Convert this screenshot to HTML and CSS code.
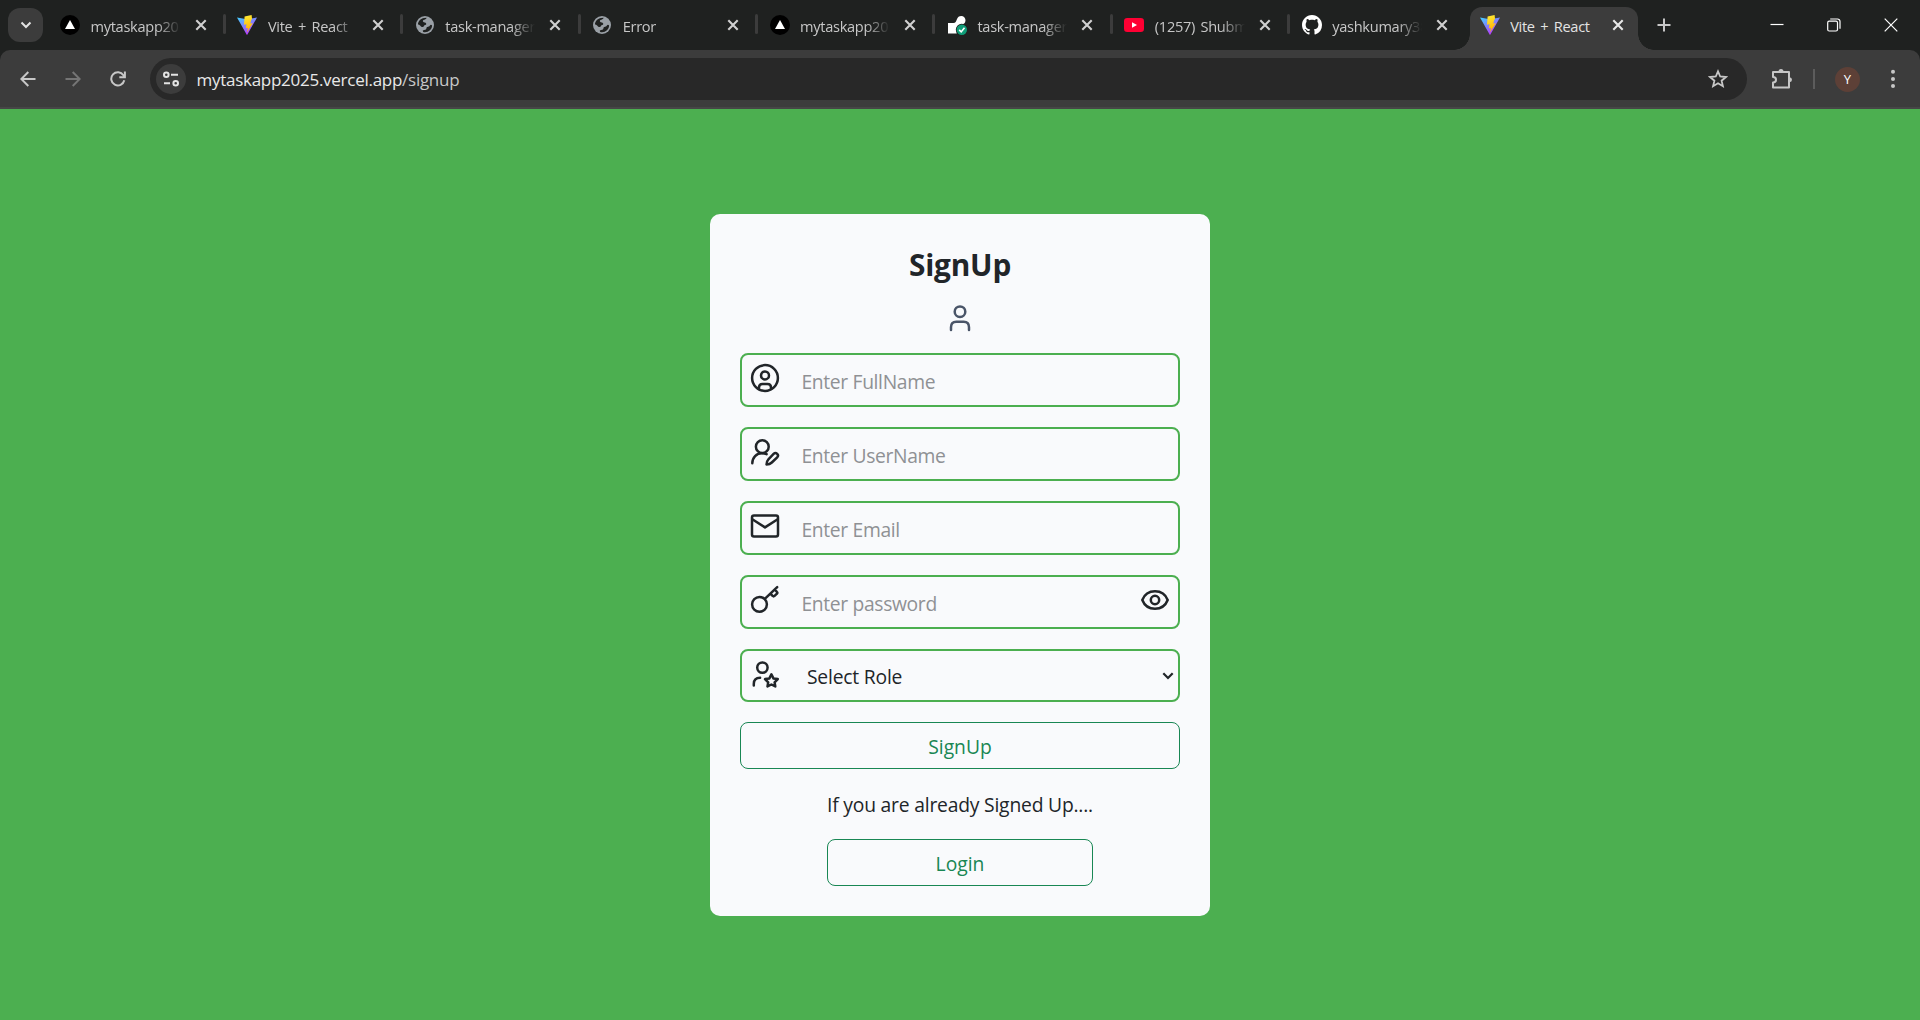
FILE: index.html
```html
<!DOCTYPE html>
<html lang="en">
<head>
<meta charset="utf-8">
<title>Vite + React</title>
<link rel="stylesheet" href="styles.css">
</head>
<body>
<svg class="defs" aria-hidden="true">
  <defs>
    <linearGradient id="vite-blue" x1="0" y1="0" x2="0.6" y2="1"><stop offset="0" stop-color="#41d1ff"/><stop offset="1" stop-color="#bd34fe"/></linearGradient>
    <linearGradient id="vite-bolt" x1="0.4" y1="0" x2="0.6" y2="1"><stop offset="0" stop-color="#ffea33"/><stop offset="1" stop-color="#ffa800"/></linearGradient>
    <symbol id="vercel" viewBox="0 0 20 20"><circle cx="10" cy="10" r="10" fill="#000"/><path d="M10 5l5 9H5z" fill="#fff"/></symbol>
    <symbol id="vite" viewBox="0 0 20 20"><path d="M0 2.600L9.900 4.300 20 2.600 10.400 19.600Q10 20.200 9.600 19.600z" fill="url(#vite-blue)"/><path d="M14.600 0L7.600 1.400l-.6 8.300 2.500-.4-.7 4 2.100-.4-1 4.700L15.800 8.200l-2.500.4 1-4 .8-.2z" fill="url(#vite-bolt)"/></symbol>
    <symbol id="globe" viewBox="0 0 20 20"><circle cx="10" cy="10" r="9" fill="#9aa0a6"/><path d="M3 8.500C3.500 6 5.800 3.300 9 2.900l2.600-.1c-.3 1.700-1.900 1.600-3.100 2.300-1 .6-.7 1.900.3 2.100 1.400.2 2.600.8 2.500 1.900-.2 1.200-2 .7-2.300 1.900-.4 1.300-2 1.100-3 .4C5 10.700 4.600 9.400 3 9.500zM17.100 10.500c-.6-.9-1.700-.8-2.200 0-.6 1.200-1.500 1-2.700 1.500-1.300.6-.3 1.700-1.300 2.400-1 .6-2.600.2-3.200 1.400l.5 1.200c4.600 1.100 8.700-2.100 8.900-6.500z" fill="#1f2120"/></symbol>
    <symbol id="render" viewBox="0 0 20 20"><path d="M1 8h5.500c2 0 2.700-1.500 3.300-3.400C10.600 2 12.200 1 14.200 1c2.500 0 4.300 2 4.300 4.300 0 2.900-2 4.400-4.500 4.400-2.400.4-4.200 2.300-4.300 5V18.500H1z" fill="#fff"/><circle cx="14.800" cy="14.800" r="6" fill="#1f2120"/><circle cx="14.800" cy="14.800" r="5.200" fill="#0f9d78"/><path d="M12.200 14.900l2 2 3.300-4.200" fill="none" stroke="#fff" stroke-width="1.600"/></symbol>
    <symbol id="youtube" viewBox="0 0 20 20"><rect y="3" width="20" height="14" rx="3.300" fill="#ff0033"/><path d="M8 7.200l5 2.800-5 2.800z" fill="#fff"/></symbol>
    <symbol id="github" viewBox="0 0 16 16"><path fill="#fff" d="M8 0C3.580 0 0 3.580 0 8c0 3.540 2.290 6.530 5.470 7.590.4.070.55-.17.55-.38 0-.19-.01-.82-.01-1.490-2.010.37-2.530-.49-2.690-.94-.09-.23-.48-.94-.82-1.130-.28-.15-.68-.52-.01-.53.63-.01 1.080.58 1.230.82.72 1.210 1.870.87 2.330.66.07-.52.28-.87.51-1.070-1.780-.2-3.640-.89-3.640-3.950 0-.87.31-1.590.82-2.150-.08-.2-.36-1.020.08-2.120 0 0 .67-.21 2.200.82.64-.18 1.320-.27 2-.27s1.360.09 2 .27c1.530-1.040 2.200-.82 2.200-.82.44 1.100.16 1.920.08 2.120.51.56.82 1.270.82 2.150 0 3.070-1.870 3.750-3.650 3.950.29.25.54.73.54 1.480 0 1.070-.01 1.930-.01 2.200 0 .21.15.46.55.38A8.010 8.010 0 0 0 16 8c0-4.420-3.580-8-8-8z"/></symbol>
    <symbol id="close" viewBox="0 0 12 12"><path d="M1.300 1.300l9.400 9.400M10.700 1.300l-9.400 9.400" stroke="currentColor" stroke-width="2.100"/></symbol>
  </defs>
</svg>

<header class="browser">
  <div class="tabstrip">
    <button class="tab-search" aria-label="Search tabs"><svg width="12" height="8" viewBox="0 0 12 8"><path d="M1.500 1.500L6 6l4.500-4.500" class="line-2"/></svg></button>
    <div class="tabs">
      <div class="tab"><svg class="favicon"><use href="#vercel"/></svg><span class="tab-title">mytaskapp20</span><svg class="close"><use href="#close"/></svg></div>
      <div class="tab"><svg class="favicon"><use href="#vite"/></svg><span class="tab-title">Vite + React</span><svg class="close"><use href="#close"/></svg></div>
      <div class="tab"><svg class="favicon"><use href="#globe"/></svg><span class="tab-title">task-manager</span><svg class="close"><use href="#close"/></svg></div>
      <div class="tab"><svg class="favicon"><use href="#globe"/></svg><span class="tab-title">Error</span><svg class="close"><use href="#close"/></svg></div>
      <div class="tab"><svg class="favicon"><use href="#vercel"/></svg><span class="tab-title">mytaskapp20</span><svg class="close"><use href="#close"/></svg></div>
      <div class="tab"><svg class="favicon"><use href="#render"/></svg><span class="tab-title">task-manager</span><svg class="close"><use href="#close"/></svg></div>
      <div class="tab"><svg class="favicon"><use href="#youtube"/></svg><span class="tab-title">(1257) Shubm</span><svg class="close"><use href="#close"/></svg></div>
      <div class="tab"><svg class="favicon"><use href="#github"/></svg><span class="tab-title">yashkumary38</span><svg class="close"><use href="#close"/></svg></div>
      <div class="tab active"><svg class="favicon"><use href="#vite"/></svg><span class="tab-title">Vite + React</span><svg class="close"><use href="#close"/></svg></div>
    </div>
    <button class="new-tab" aria-label="New tab"><svg width="14" height="14" viewBox="0 0 14 14"><path d="M7 .5v13M.5 7h13" class="line-2"/></svg></button>
    <div class="window-controls">
      <svg width="14" height="14" viewBox="0 0 14 14"><path d="M.5 6.500h13"/></svg>
      <svg width="14" height="14" viewBox="0 0 14 14"><rect x=".7" y="3.200" width="9.800" height="9.800" rx="1.500"/><path d="M3.200 1h7.300a2.500 2.500 0 0 1 2.500 2.500v7.300"/></svg>
      <svg width="14" height="14" viewBox="0 0 14 14"><path d="M.7.700l12.600 12.600M13.300.700L.700 13.300"/></svg>
    </div>
  </div>

  <div class="toolbar">
    <nav class="nav-buttons">
      <svg width="16" height="16" viewBox="0 0 16 16"><path d="M15.500 8H1.800M8.300 1L1.300 8l7 7" class="line-2"/></svg>
      <svg class="disabled" width="16" height="16" viewBox="0 0 16 16"><path d="M.5 8h13.700M7.700 1l7 7-7 7" class="line-2"/></svg>
      <svg width="16" height="16" viewBox="0 0 16 16"><path d="M14.300 9.300A6.600 6.600 0 1 1 13.400 4.200L14.600 5.600M14.900.5v5.800H9.300" class="line-2"/></svg>
    </nav>
    <div class="omnibox">
      <span class="site-info"><svg width="16" height="16" viewBox="0 0 16 16"><circle cx="3.300" cy="3.700" r="2.300" class="line-2"/><path d="M8 3.700h7M1 12.300h6" class="line-2"/><circle cx="12.700" cy="12.300" r="2.300" class="line-2"/></svg></span>
      <span class="url">mytaskapp2025.vercel.app<span class="path">/signup</span></span>
      <svg class="bookmark" width="20" height="20" viewBox="0 0 20 20"><path d="M10 2.300l2.200 5.200 5.700.5-4.300 3.700 1.300 5.500-4.900-2.900-4.900 2.900 1.300-5.500L2.100 8l5.700-.5z" fill="none" stroke="currentColor" stroke-width="1.800"/></svg>
    </div>
    <div class="tools">
      <svg width="22" height="22" viewBox="0 0 22 22"><path d="M3 4h15v15.500H2v-5c2.300 0 3-1.200 3-2.800S4 9 2 9V4h3" fill="none" stroke="currentColor" stroke-width="2" stroke-linejoin="round"/><path d="M7.500 3.500a2.500 2.500 0 0 1 5 0zM18.500 9.200a2.500 2.500 0 0 1 0 5z" fill="currentColor"/></svg>
      <span class="divider"></span>
      <span class="avatar">Y</span>
      <svg class="menu" width="4" height="20" viewBox="0 0 4 20"><circle cx="2" cy="2.700" r="2"/><circle cx="2" cy="10" r="2"/><circle cx="2" cy="17" r="2"/></svg>
    </div>
  </div>
</header>

<main class="page">
  <form class="card">
    <h2 class="title">SignUp</h2>
    <svg class="user-icon" width="24" height="28" viewBox="0 0 24 28"><circle cx="12" cy="7.700" r="5.300"/><path d="M3 26v-2.800c0-3.600 1.900-5.500 5.300-5.500h7.400c3.400 0 5.300 1.900 5.300 5.500V26"/></svg>

    <label class="field">
      <svg class="icon" viewBox="0 0 30 30"><circle cx="15" cy="15" r="12.900"/><circle cx="15" cy="12.400" r="4"/><path d="M9 26v-1.400c0-2.600 1.200-3.600 3.500-3.600h5c2.300 0 3.500 1 3.500 3.600V26"/></svg>
      <input class="input" type="text" placeholder="Enter FullName">
    </label>
    <label class="field">
      <svg class="icon" viewBox="0 0 30 30"><circle cx="12.300" cy="9.700" r="6.400"/><path d="M2.300 26.300C2.300 20.500 6.500 16.200 12 16.200c1.700 0 3.100.3 4.600 1"/><path d="M27.200 16.900c-1-1-2.600-1-3.600 0l-5.200 5.400c-1.300 1.400-1.800 2.900-1.900 5.200 2.400 0 4-.7 5.300-2l5.400-5.200c1-1 1-2.400 0-3.400z"/></svg>
      <input class="input" type="text" placeholder="Enter UserName">
    </label>
    <label class="field">
      <svg class="icon" viewBox="0 0 30 30"><rect x="2" y="4.400" width="26" height="21" rx="2"/><path d="M2.300 8.300L15 16.400l12.700-8.100"/></svg>
      <input class="input" type="email" placeholder="Enter Email">
    </label>
    <label class="field">
      <svg class="icon" viewBox="0 0 30 30"><circle cx="9.500" cy="19.300" r="7.400"/><path d="M14.800 13.900L27.200 2.100M20.400 8.600l2.200 2.300q1 .9 2 0l2.300-2.200q1-.9 0-1.900L24.700 4.500"/></svg>
      <input class="input" type="password" placeholder="Enter password">
      <svg class="icon icon-end" viewBox="0 0 30 30"><path d="M2.300 15C4.500 9.300 9.200 6.300 15 6.300S25.500 9.300 27.700 15C25.500 20.700 20.800 23.700 15 23.700S4.500 20.700 2.300 15z"/><circle cx="15" cy="15" r="4.200"/></svg>
    </label>
    <label class="field field-select">
      <svg class="icon" viewBox="0 0 30 30"><circle cx="12.400" cy="8.600" r="5.200"/><path d="M3.800 26.600V25c0-4.200 2.200-6.300 6.300-6.300"/><path d="M21.400 15.300l2 4.100 4.400.7-3.200 3.200.7 4.100-3.900-1.900-3.900 1.900.7-4.100-3.200-3.200 4.400-.7z"/></svg>
      <select class="input select"><option>Select Role</option></select>
      <svg class="chevron" width="12" height="8" viewBox="0 0 12 8"><path d="M1.300 1.300L6 6l4.700-4.700"/></svg>
    </label>

    <button class="btn btn-wide" type="button">SignUp</button>
    <p class="hint">If you are already Signed Up....</p>
    <button class="btn btn-login" type="button">Login</button>
  </form>
</main>
</body>
</html>
```
FILE: styles.css
```css
* { box-sizing: border-box; }

body {
  margin: 0;
  height: 1020px;
  display: flex;
  flex-direction: column;
  overflow: hidden;
  background: #4caf50;
  font-family: "Open Sans", "Noto Sans", sans-serif;
  color: #212529;
}

button { border: 0; padding: 0; background: none; font: inherit; color: inherit; }

.defs { position: absolute; width: 0; height: 0; }
.line-2 { fill: none; stroke: currentColor; stroke-width: 2; }

/* Browser window */
.browser { height: 109px; background: #1f2120; color: #c7c7c7; }

.tabstrip { height: 50px; display: flex; align-items: center; padding-left: 8px; }

.tab-search {
  width: 35px;
  height: 34px;
  display: grid;
  place-items: center;
  border-radius: 12px;
  background: #3c3c3c;
  color: #e3e3e3;
}

.tabs { display: flex; height: 50px; margin-left: 3.500px; }

.tab {
  position: relative;
  width: 177.400px;
  display: flex;
  align-items: center;
  padding-left: 13.500px;
}

.tab::after {
  content: "";
  position: absolute;
  right: -2px;
  top: 14px;
  width: 3px;
  height: 20px;
  border-radius: 2px;
  background: #3c3c3c;
}

.tab:nth-child(8)::after { display: none; }

.favicon { width: 20px; height: 20px; flex: none; }

.tab-title {
  width: 90px;
  margin-left: 10.500px;
  padding-top: 2px;
  overflow: hidden;
  white-space: nowrap;
  font-size: 14.600px;
  line-height: 24px;
  letter-spacing: -0.300px;
  word-spacing: 2px;
  -webkit-mask-image: linear-gradient(90deg, #000 66px, transparent 90px);
  mask-image: linear-gradient(90deg, #000 66px, transparent 90px);
}

.close { width: 12px; height: 12px; margin-left: 14px; color: #d0d0d0; }

.tab.active {
  width: 168px;
  height: 43px;
  margin: 7px 0 0 4px;
  padding: 0 0 7px 10px;
  border-radius: 12px 12px 0 0;
  background: #3c3c3c;
  color: #e3e3e3;
}

.tab.active .tab-title { -webkit-mask-image: none; mask-image: none; width: 88px; }
.tab.active .close { color: #e8e8e8; }

.tab.active::before,
.tab.active::after {
  content: "";
  position: absolute;
  top: auto;
  bottom: 0;
  width: 16px;
  height: 16px;
  border-radius: 0;
}

.tab.active::before { left: -16px; background: radial-gradient(circle at 0 0, transparent 15.500px, #3c3c3c 16px); }
.tab.active::after { right: -16px; background: radial-gradient(circle at 100% 0, transparent 15.500px, #3c3c3c 16px); }

.new-tab { margin-left: 19px; display: flex; }

.window-controls { margin: -1px 22px 0 auto; display: flex; gap: 43px; }
.window-controls svg { fill: none; stroke: #fff; stroke-width: 1.200; }

.toolbar {
  height: 59px;
  display: flex;
  align-items: flex-start;
  padding-top: 8px;
  border-bottom: 2px solid #464646;
  border-radius: 10px 10px 0 0;
  background: #3c3c3c;
}

.nav-buttons { width: 150px; height: 42px; display: flex; align-items: center; gap: 29px; padding-left: 19.500px; }
.disabled { color: #757575; }

.omnibox {
  width: 1597px;
  height: 42px;
  display: flex;
  align-items: center;
  padding: 0 19.500px 0 6px;
  border-radius: 21px;
  background: #282828;
}

.site-info {
  width: 30px;
  height: 30px;
  display: grid;
  place-items: center;
  border-radius: 50%;
  background: #3c3c3c;
  color: #e3e3e3;
}

.url { margin: 1px 0 0 10.500px; font-size: 17px; letter-spacing: -0.270px; color: #e8e8e8; white-space: nowrap; }
.path { color: #c7c7c7; }
.bookmark { margin-left: auto; }

.tools { height: 42px; display: flex; align-items: center; margin-left: 24px; }
.divider { width: 2px; height: 20px; margin-left: 20px; background: #5c5c5c; }

.avatar {
  width: 25px;
  height: 25px;
  margin-left: 20px;
  border-radius: 50%;
  background: #5d4037;
  color: #fff;
  font-size: 13px;
  line-height: 25px;
  text-align: center;
}

.menu { margin-left: 30.500px; fill: #c7c7c7; }

/* Sign-up page */
.page { flex: 1; display: flex; justify-content: center; align-items: flex-start; padding-top: 105px; }

.card {
  width: 500px;
  height: 702px;
  display: flex;
  flex-direction: column;
  align-items: center;
  padding: 30px;
  border-radius: 10px;
  background: #f9fafc;
  font-size: 19.300px;
}

.title { margin: 1px 0 1px; font-size: 29.800px; line-height: 40px; font-weight: 700; letter-spacing: -0.200px; }

.user-icon { margin: 18px 0 21px; fill: none; stroke: #4a5568; stroke-width: 2.500; stroke-linecap: round; }

.field {
  width: 440px;
  height: 54px;
  flex: none;
  display: flex;
  align-items: center;
  margin-bottom: 20px;
  padding: 0 8px;
  border: 2px solid #4caf50;
  border-radius: 8px;
}

.field-select { height: 53px; }

.icon {
  width: 30px;
  height: 30px;
  flex: none;
  align-self: flex-start;
  margin-top: 8px;
  fill: none;
  stroke: #212529;
  stroke-width: 2.500;
  stroke-linecap: round;
  stroke-linejoin: round;
}

.input {
  flex: 1;
  min-width: 0;
  height: 48px;
  margin-left: 21.500px;
  padding: 2px 0 0;
  border: 0;
  outline: 0;
  background: transparent;
  font: inherit;
  letter-spacing: -0.350px;
  color: inherit;
}

.input::placeholder { color: #8f9194; opacity: 1; }
.select { margin-left: 27px; letter-spacing: -0.200px; appearance: none; }
.chevron { margin-right: -4px; margin-top: 1px; fill: none; stroke: #212529; stroke-width: 2.200; }

.btn {
  height: 47px;
  flex: none;
  padding-top: 2px;
  border: 1px solid #198754;
  border-radius: 8px;
  color: #198754;
}

.btn-wide { width: 440px; }
.btn-login { width: 266px; }
.hint { margin: 21px 0 19px; line-height: 30px; letter-spacing: -0.200px; white-space: nowrap; }
```
